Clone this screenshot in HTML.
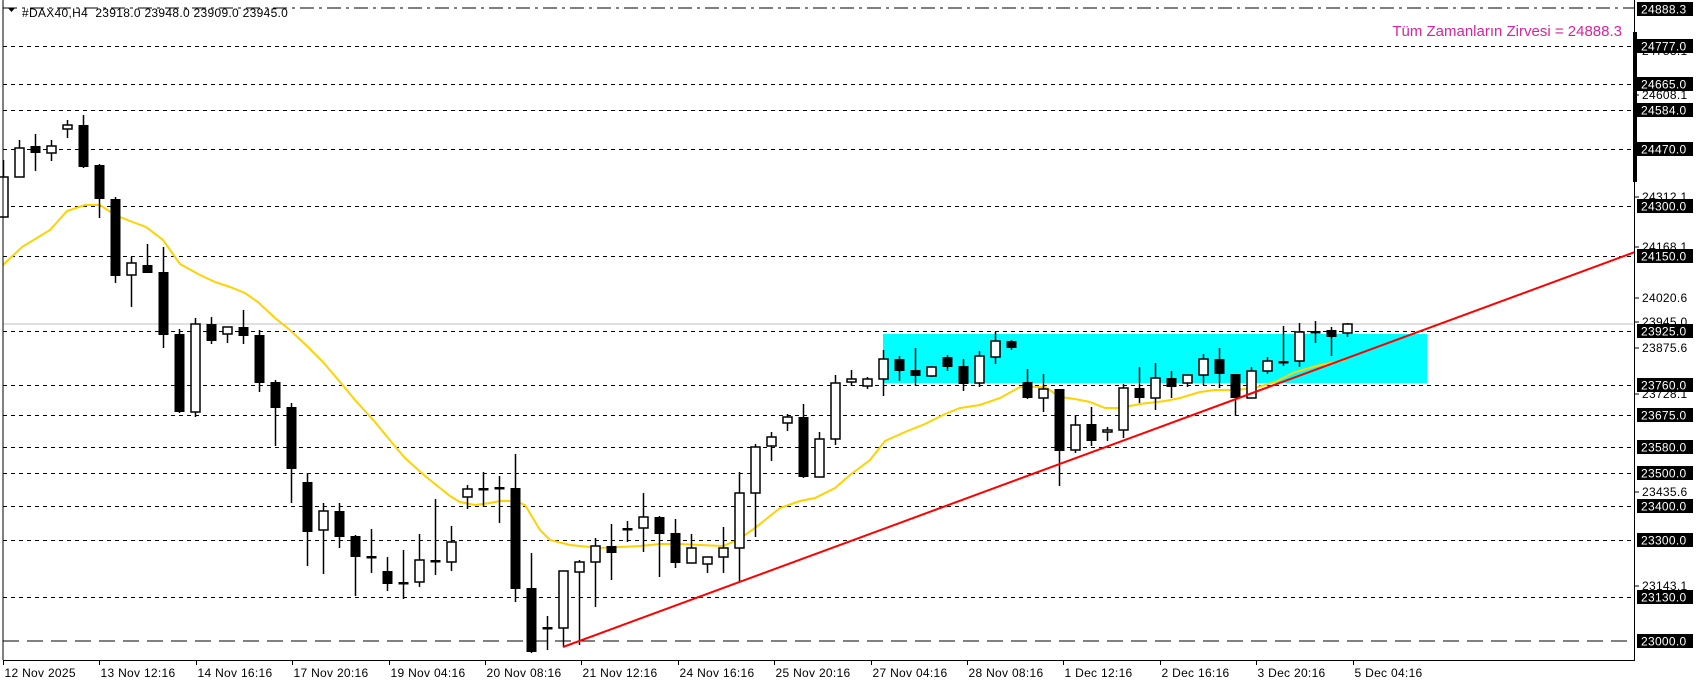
<!DOCTYPE html>
<html><head><meta charset="utf-8">
<style>
html,body{margin:0;padding:0;background:#fff;}
body{width:1699px;height:684px;overflow:hidden;position:relative;font-family:"Liberation Sans",sans-serif;}
svg{position:absolute;left:0;top:0;}
.t{font-family:"Liberation Sans",sans-serif;font-size:12px;letter-spacing:0.3px;}
</style></head><body>
<svg id="c" width="1699" height="684" xmlns="http://www.w3.org/2000/svg">
<rect x="883" y="334" width="544" height="49" fill="#00ffff"/>
<g id="grid"></g>
<line x1="3" y1="324" x2="1634" y2="324" stroke="#c0c0c0" stroke-width="1"/>
<line x1="3" y1="8" x2="1634" y2="8" stroke="#000" stroke-dasharray="14,5,3,5"/>
<line x1="3" y1="641" x2="1634" y2="641" stroke="#000" stroke-dasharray="16,8"/>
<polyline id="ma" fill="none" stroke="#ffd200" stroke-width="2"/>
<g id="cdl"></g>
<line x1="563" y1="647" x2="1635" y2="252" stroke="#ff0000" stroke-width="2"/>
<line x1="3" y1="0" x2="3" y2="660" stroke="#000"/>
<line x1="1634.5" y1="0" x2="1634.5" y2="660" stroke="#000"/>
<line x1="3" y1="660.5" x2="1635" y2="660.5" stroke="#000"/>
<rect x="1633" y="32" width="4" height="150" fill="#000"/>
<polygon points="8,8 15,8 11.5,12" fill="#000"/>
<text x="22" y="17" class="t" fill="#000">#DAX40,H4&#160;&#160;23918.0 23948.0 23909.0 23945.0</text>
<text x="1622" y="36" text-anchor="end" font-family="Liberation Sans,sans-serif" font-size="15" fill="#d6249f">Tüm Zamanların Zirvesi = 24888.3</text>
<g id="ax"></g>
<g id="dt"></g>
</svg>
<script>
var NS="http://www.w3.org/2000/svg";
function el(p,n,a,txt){var e=document.createElementNS(NS,n);for(var k in a)e.setAttribute(k,a[k]);if(txt!==undefined)e.textContent=txt;p.appendChild(e);return e;}
var g=document.getElementById('grid');
[46,84,110,149,206,256,331,385,415,447,473,506,540,597].forEach(function(y){el(g,'line',{x1:3,y1:y+.5,x2:1634,y2:y+.5,stroke:'#000','stroke-dasharray':'4,4'});});
var C=[[177,217,160,217,1],[148,177,140,177,1],[146,153,134,171,0],[146,153,140,161,1],[125,129,120,138,1],[125,167,115,168,0],[165,199,164,218,0],[199,276,197,283,0],[263,275,257,307,1],[265,273,244,273,0],[272,335,247,348,0],[334,412,329,413,0],[324,412,318,417,1],[324,341,317,344,0],[327,334,327,343,1],[327,336,310,344,0],[335,383,330,392,0],[382,408,380,446,0],[407,469,403,503,0],[482,532,473,566,0],[511,530,503,574,1],[511,537,503,548,0],[536,557,535,596,0],[557,557,529,573,2],[571,584,557,591,0],[583,583,550,599,2],[560,582,534,587,1],[561,561,499,575,2],[542,562,526,571,1],[489,497,485,509,1],[489,489,472,507,2],[488,488,476,523,2],[488,589,454,602,0],[588,652,553,653,0],[628,628,616,650,2],[571,628,572,647,1],[562,572,560,645,1],[546,562,538,607,1],[546,553,524,580,0],[529,529,521,542,2],[517,528,493,552,1],[517,534,516,577,0],[533,563,519,568,0],[548,563,534,563,1],[557,564,557,573,1],[548,557,527,573,1],[493,548,472,582,1],[447,493,444,537,1],[437,446,432,461,1],[417,423,414,431,1],[417,477,404,478,0],[439,477,432,477,1],[383,439,375,445,1],[379,382,370,386,1],[379,386,377,389,1],[359,379,350,396,1],[359,371,356,381,0],[370,376,348,386,0],[367,376,366,377,1],[357,367,355,371,0],[366,384,359,391,0],[356,383,351,387,1],[341,357,332,364,1],[341,348,340,350,0],[382,398,369,399,0],[389,398,374,412,1],[389,451,389,486,0],[425,450,415,453,1],[424,441,407,446,0],[430,432,427,441,1],[388,430,384,438,1],[388,398,367,403,0],[378,398,363,410,1],[378,387,371,398,0],[375,383,375,387,1],[359,375,354,385,1],[359,374,348,388,0],[374,398,374,416,0],[371,398,367,398,1],[361,371,357,374,1],[362,362,326,366,2],[332,361,323,367,1],[332,332,321,343,2],[330,337,327,356,0],[324,333,323,337,1]];
var cg=document.getElementById('cdl');
C.forEach(function(c,i){var x=3.3+16*i;var cx=Math.round(x)+.5;
 el(cg,'line',{x1:cx,y1:c[2],x2:cx,y2:c[3],stroke:'#000','stroke-width':1.5});
 if(c[4]==2){el(cg,'rect',{x:cx-5,y:c[0]-1,width:10,height:2.5,fill:'#000'});}
 else{var h=Math.max(c[1]-c[0],2);
  if(c[4]==1)el(cg,'rect',{x:cx-4.5,y:c[0],width:9,height:h,fill:'#fff',stroke:'#000','stroke-width':1.5});
  else el(cg,'rect',{x:cx-5,y:c[0],width:10,height:h,fill:'#000'});}
});
var ma=[[3,265],[22,247],[50,230],[67,211],[85,205],[100,205],[115,215],[130,221],[146,227],[163,240],[180,264],[200,275],[215,282],[230,287],[245,293],[258,302],[275,318],[290,330],[308,347],[323,362],[340,382],[355,400],[375,422],[393,444],[405,458],[425,476],[440,488],[450,496],[460,502],[475,505],[490,503],[500,501],[515,501],[525,505],[540,530],[550,540],[570,545],[600,548],[620,547],[640,546],[660,544],[680,544],[700,545],[723,546],[738,540],[755,528],[780,508],[800,501],[815,498],[835,488],[850,475],[870,460],[885,441],[905,432],[925,424],[945,414],[960,408],[980,405],[1000,398],[1020,387],[1045,387],[1060,397],[1075,399],[1090,402],[1105,408],[1120,408],[1140,404],[1165,401],[1180,398],[1200,392],[1215,390],[1235,390],[1255,388],[1275,382],[1295,372],[1320,365],[1345,360]];
document.getElementById('ma').setAttribute('points',ma.map(function(p){return p.join(',');}).join(' '));
var ax=document.getElementById('ax');
var L=[['24888.3',9],['24777.0',46],['24665.0',84],['24584.0',110],['24470.0',149],['24300.0',206],['24150.0',256],['23925.0',331],['23760.0',385],['23675.0',415],['23580.0',447],['23500.0',473],['23400.0',506],['23300.0',540],['23130.0',597],['23000.0',641]];
L.forEach(function(l){el(ax,'rect',{x:1637,y:l[1]-7,width:56,height:14,fill:'#000'});});
[['24753.1',55],['24608.1',99],['24312.1',201],['24168.1',251],['24020.6',302],['23945.0',326],['23875.6',352],['23728.1',398],['23435.6',496],['23143.1',590]].forEach(function(l){
 el(ax,'line',{x1:1635,y1:l[1]-4,x2:1639,y2:l[1]-4,stroke:'#000'});
 el(ax,'text',{x:1642,y:l[1],'class':'t',fill:'#000'},l[0]);
});
L.forEach(function(l){el(ax,'text',{x:1641,y:l[1]+4.5,'class':'t',fill:'#fff'},l[0]);});
var dt=document.getElementById('dt');
['12 Nov 2025','13 Nov 12:16','14 Nov 16:16','17 Nov 20:16','19 Nov 04:16','20 Nov 08:16','21 Nov 12:16','24 Nov 16:16','25 Nov 20:16','27 Nov 04:16','28 Nov 08:16','1 Dec 12:16','2 Dec 16:16','3 Dec 20:16','5 Dec 04:16'].forEach(function(s,i){
 var x=Math.round(3+96.4*i)+.5;
 el(dt,'line',{x1:x,y1:661,x2:x,y2:665,stroke:'#000'});
 el(dt,'text',{x:x+1,y:677,'class':'t',fill:'#000'},s);
});
</script>
</body></html>
